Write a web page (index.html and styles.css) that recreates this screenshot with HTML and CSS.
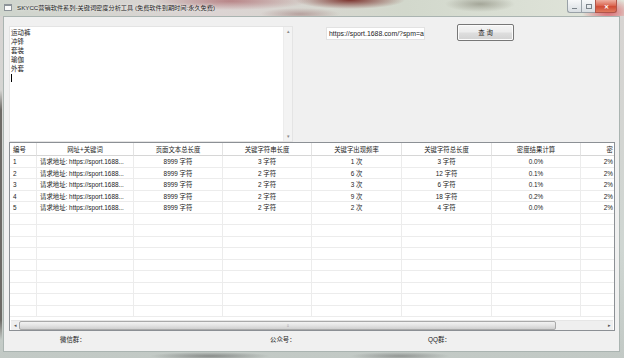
FILE: index.html
```html
<!DOCTYPE html>
<html lang="zh-CN">
<head>
  <meta charset="UTF-8">
  <title>SKYCC营销软件系列-关键词密度分析工具</title>
  <link rel="stylesheet" href="styles.css">
</head>
<body>
  <div class="window">
    <div class="titlebar">
      <span class="app-icon"></span>
      <span class="title">SKYCC营销软件系列-关键词密度分析工具 (免费软件到期时间:永久免费)</span>
      <div class="caption">
        <span class="cap-btn cap-min"><i></i></span>
        <span class="cap-btn cap-max"><i></i></span>
        <span class="cap-btn cap-close">✕</span>
      </div>
    </div>

    <div class="client">
      <div class="top">
        <div class="memo">
          <div class="memo-text">
            <div>运动裤</div>
            <div>冲锋</div>
            <div>套装</div>
            <div>瑜伽</div>
            <div>外套</div>
            <div><span class="caret"></span></div>
          </div>
          <div class="vscroll">
            <span class="arrow">▴</span>
            <span class="arrow">▾</span>
          </div>
        </div>
        <div class="url-input">https://sport.1688.com/?spm=a</div>
        <div class="btn">查 询</div>
      </div>

      <div class="listview">
        <div class="grid-wrap">
          <div class="grid" id="grid"></div>
        </div>
        <div class="hscroll">
          <span class="h-arrow">◂</span>
          <span class="h-thumb"><em>⦙⦙</em></span>
          <span class="h-track"></span>
          <span class="h-arrow">▸</span>
        </div>
      </div>

      <div class="footer">
        <span class="f-item f-wx">微信群：</span>
        <span class="f-item f-gz">公众号：</span>
        <span class="f-item">QQ群：</span>
      </div>
    </div>
  </div>

  <script>
    const headers = ["编号", "网址+关键词", "页面文本总长度", "关键字符串长度", "关键字出现频率", "关键字符总长度", "密度结果计算", "密"];
    const rows = [
      ["1", "请求地址: https://sport.1688...", "8999 字符", "3 字符", "1 次", "3 字符", "0.0%", "2%"],
      ["2", "请求地址: https://sport.1688...", "8999 字符", "2 字符", "6 次", "12 字符", "0.1%", "2%"],
      ["3", "请求地址: https://sport.1688...", "8999 字符", "2 字符", "3 次", "6 字符", "0.1%", "2%"],
      ["4", "请求地址: https://sport.1688...", "8999 字符", "2 字符", "9 次", "18 字符", "0.2%", "2%"],
      ["5", "请求地址: https://sport.1688...", "8999 字符", "2 字符", "2 次", "4 字符", "0.0%", "2%"]
    ];

    const grid = document.getElementById("grid");

    headers.forEach((text, i) => {
      const cell = document.createElement("div");
      cell.className = "th c" + (i + 1);
      cell.textContent = text;
      grid.appendChild(cell);
    });

    // empty rows fill the rest of the list
    for (let r = 0; r < 14; r++) {
      const data = rows[r] || ["", "", "", "", "", "", "", ""];
      data.forEach((text, i) => {
        const cell = document.createElement("div");
        cell.className = "td c" + (i + 1);
        cell.textContent = text;
        grid.appendChild(cell);
      });
    }
  </script>
</body>
</html>
```

FILE: styles.css
```css
* {
  box-sizing: border-box;
}

body {
  margin: 0;
  width: 624px;
  height: 358px;
  overflow: hidden;
  font-family: "Liberation Sans", "Noto Sans CJK SC", sans-serif;
  font-size: 6.4px;
  color: #1c1c1c;
}

.window {
  width: 624px;
  height: 358px;
  display: flex;
  flex-direction: column;
  background:
    linear-gradient(to bottom, transparent 90px, #6d6a66 110px, #6d6a66 320px, transparent 340px) left / 2px 100% no-repeat,
    radial-gradient(60px 4px at 210px 356px, rgba(80, 80, 80, 0.5), transparent),
    radial-gradient(50px 4px at 400px 356px, rgba(90, 90, 90, 0.45), transparent),
    linear-gradient(to bottom, #d8d4d2, #cfd6d2 70%, #c2c9c5);
}

/* title bar, blurred desktop behind the glass */
.titlebar {
  height: 16px;
  flex: none;
  display: flex;
  align-items: flex-start;
  background:
    radial-gradient(80px 9px at 230px 1px, rgba(160, 80, 85, 0.6), transparent),
    radial-gradient(55px 9px at 350px 0, rgba(115, 35, 30, 0.9), transparent),
    radial-gradient(40px 6px at 300px 14px, rgba(150, 110, 110, 0.5), transparent),
    radial-gradient(35px 8px at 480px 4px, rgba(130, 130, 115, 0.6), transparent),
    radial-gradient(26px 14px at 608px 12px, rgba(215, 60, 75, 0.75), transparent),
    linear-gradient(to right, #cfd5cd, #dcd4d3 35%, #d2d8cc 65%, #e2e6dc);
}

.app-icon {
  width: 8px;
  height: 7px;
  margin: 4px 0 0 4px;
  background: #fbfbfb;
  border: 1px solid #8d9499;
  border-top-width: 2px;
}

.title {
  margin: 3px 0 0 5px;
  font-size: 6.2px;
  line-height: 9px;
  color: #262626;
  text-shadow: 0 0 3px rgba(255, 255, 255, 0.9);
}

.caption {
  margin-left: auto;
  margin-right: 7px;
  display: flex;
}

.cap-btn {
  height: 13px;
  display: flex;
  align-items: center;
  justify-content: center;
  border: 1px solid #99a1a7;
  border-top: none;
  background: linear-gradient(#f7f8f9, #e8ebee 50%, #d9dee2);
}

.cap-min {
  width: 14px;
  border-radius: 0 0 0 3px;
  border-right: none;
}

.cap-min i {
  width: 5px;
  height: 1px;
  margin-top: 4px;
  background: #7b838a;
}

.cap-max {
  width: 14px;
  border-right: none;
}

.cap-max i {
  width: 6px;
  height: 5px;
  border: 1px solid #7b838a;
}

.cap-close {
  width: 22px;
  border-radius: 0 0 3px 0;
  border-color: #b0564a;
  background: linear-gradient(#eeb0a2, #dc6a55 45%, #d04c36 55%, #e07a5e);
  color: #fff;
  font-size: 6px;
  font-weight: bold;
}

/* client area */
.client {
  flex: 1;
  margin: 0 4px 6px 3px;
  background: #f0f0f0;
  border: 1px solid #aab4b1;
  padding: 7px 5px 0 5px;
  display: flex;
  flex-direction: column;
}

.top {
  display: flex;
  align-items: flex-start;
}

.memo {
  width: 284px;
  height: 116px;
  margin-top: 2px;
  display: flex;
  background: #fff;
  border: 1px solid #e4e4e4;
}

.memo-text {
  flex: 1;
  padding: 1px 1px;
  line-height: 9px;
  font-size: 6.5px;
}

.caret {
  display: inline-block;
  width: 1px;
  height: 8px;
  margin-top: 1px;
  background: #000;
  vertical-align: top;
}

.vscroll {
  width: 9px;
  display: flex;
  flex-direction: column;
  justify-content: space-between;
  align-items: center;
  background: #f3f3f3;
  border-left: 1px solid #ececec;
}

.arrow {
  font-size: 5px;
  line-height: 9px;
  color: #8a8a8a;
}

.url-input {
  width: 99px;
  height: 13px;
  margin: 3px 0 0 33px;
  padding-left: 2px;
  background: #fff;
  border: 1px solid #e2e2e2;
  font-size: 6.9px;
  line-height: 11px;
  white-space: nowrap;
  overflow: hidden;
}

.btn {
  width: 57px;
  height: 17px;
  margin-left: 32px;
  display: flex;
  align-items: center;
  justify-content: center;
  border: 1px solid #777;
  border-radius: 2px;
  background: linear-gradient(#f4f4f4, #ececec 48%, #dedede 52%, #d2d2d2);
  box-shadow: inset 0 0 0 1px #fbfbfb;
  font-size: 6.4px;
}

/* list view */
.listview {
  width: 606px;
  height: 189px;
  background: #fff;
  border: 1px solid #8c9095;
  display: flex;
  flex-direction: column;
}

.grid-wrap {
  flex: 1;
  overflow: hidden;
}

.grid {
  display: grid;
  grid-template-columns: 27px 97px 89px 89px 90px 90px 89px 33px;
  grid-template-rows: 13px;
  grid-auto-rows: 11.5px;
  width: 604px;
}

.th {
  border-right: 1px solid #e3e3e3;
  border-bottom: 1px solid #d6d6d6;
  text-align: center;
  line-height: 13px;
  white-space: nowrap;
  overflow: hidden;
}

.td {
  border-right: 1px solid #ececec;
  border-bottom: 1px solid #ececec;
  text-align: center;
  line-height: 11px;
  white-space: nowrap;
  overflow: hidden;
}

.th.c1, .td.c1 {
  text-align: left;
  padding-left: 3px;
}

.td.c2 {
  text-align: left;
  padding-left: 3px;
}

.th.c8, .td.c8 {
  border-right: none;
  text-align: right;
  padding-right: 1px;
}

.hscroll {
  height: 10px;
  margin: 0 1px;
  display: flex;
  background: #efefef;
  border-top: 1px solid #e6e6e6;
}

.h-arrow {
  width: 8px;
  font-size: 5px;
  line-height: 9px;
  text-align: center;
  color: #555;
}

.h-thumb {
  width: 537px;
  display: flex;
  align-items: center;
  justify-content: center;
  border: 1px solid #a9a9a9;
  border-radius: 2px;
  background: linear-gradient(#f2f2f2, #e3e3e3 50%, #cfcfcf);
}

.h-thumb em {
  font-style: normal;
  font-size: 4px;
  color: #888;
}

.h-track {
  flex: 1;
}

/* bottom labels */
.footer {
  display: flex;
  padding: 4px 0 0 51px;
  line-height: 9px;
}

.f-wx {
  width: 210px;
}

.f-gz {
  width: 158px;
}
```
